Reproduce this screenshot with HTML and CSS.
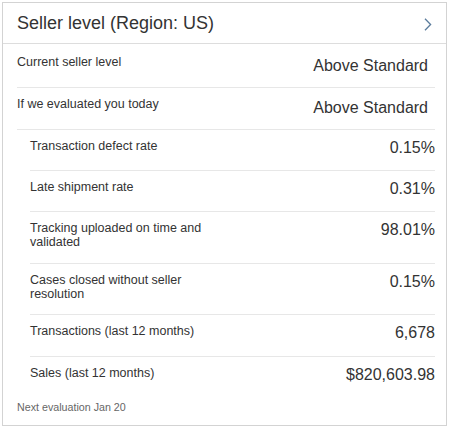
FILE: index.html
```html
<!DOCTYPE html>
<html lang="en">
<head>
<meta charset="utf-8">
<title>Seller level</title>
<link rel="stylesheet" href="styles.css">
</head>
<body>
<div class="card">
  <div class="card-header">
    <span class="card-title">Seller level (Region: US)</span>
    <svg class="chevron" width="8" height="13" viewBox="0 0 8 13" aria-hidden="true">
      <polyline points="1,0.8 6.6,6.5 1,12.2" fill="none" stroke="#5b7c9c" stroke-width="1.3"/>
    </svg>
  </div>
  <div class="card-body">
    <div class="row row-top row-first">
      <div class="label">Current seller level</div>
      <div class="value">Above Standard</div>
    </div>
    <div class="row row-top">
      <div class="label">If we evaluated you today</div>
      <div class="value">Above Standard</div>
    </div>
    <div class="row row-sub">
      <div class="label">Transaction defect rate</div>
      <div class="value">0.15%</div>
    </div>
    <div class="row row-sub">
      <div class="label">Late shipment rate</div>
      <div class="value">0.31%</div>
    </div>
    <div class="row row-sub">
      <div class="label">Tracking uploaded on time and<br>validated</div>
      <div class="value">98.01%</div>
    </div>
    <div class="row row-sub">
      <div class="label">Cases closed without seller<br>resolution</div>
      <div class="value">0.15%</div>
    </div>
    <div class="row row-sub">
      <div class="label">Transactions (last 12 months)</div>
      <div class="value">6,678</div>
    </div>
    <div class="row row-sub row-last">
      <div class="label">Sales (last 12 months)</div>
      <div class="value">$820,603.98</div>
    </div>
    <div class="footer">Next evaluation Jan 20</div>
  </div>
</div>
</body>
</html>
```
FILE: styles.css
```css
html, body {
  margin: 0;
  padding: 0;
  background: #ffffff;
}

body {
  font-family: "Liberation Sans", Arial, sans-serif;
  color: #333333;
}

.card {
  margin: 2px 0 0 2px;
  width: 443px;
  border: 1px solid #d3d3d3;
  background: #ffffff;
}

.card-header {
  height: 40px;
  display: flex;
  align-items: center;
  justify-content: space-between;
  padding: 0 14px 0 14px;
  border-bottom: 1px solid #dddddd;
}

.card-title {
  font-size: 18px;
  color: #333333;
}

.chevron {
  display: block;
  margin-top: 3px;
}

.card-body {
  padding: 0 11px 0 14px;
}

.row {
  display: flex;
  justify-content: space-between;
  align-items: flex-start;
  padding: 9px 0 13.4px;
  border-bottom: 1px solid #e7e7e7;
}

.row-top {
  padding-bottom: 11.4px;
}

.row-first {
  padding-top: 11px;
  padding-bottom: 12.3px;
}

.row-sub {
  margin-left: 13px;
}

.row-last {
  border-bottom: none;
}

.label {
  font-size: 12.5px;
  line-height: 14px;
  color: #333333;
}

.value {
  font-size: 16px;
  line-height: 18px;
  color: #333333;
  white-space: nowrap;
}

.row-top .value {
  margin-top: 2px;
  margin-right: 7px;
}

.footer {
  font-size: 10.7px;
  line-height: 13px;
  color: #666666;
  padding: 3.5px 0 11.7px;
}
```
